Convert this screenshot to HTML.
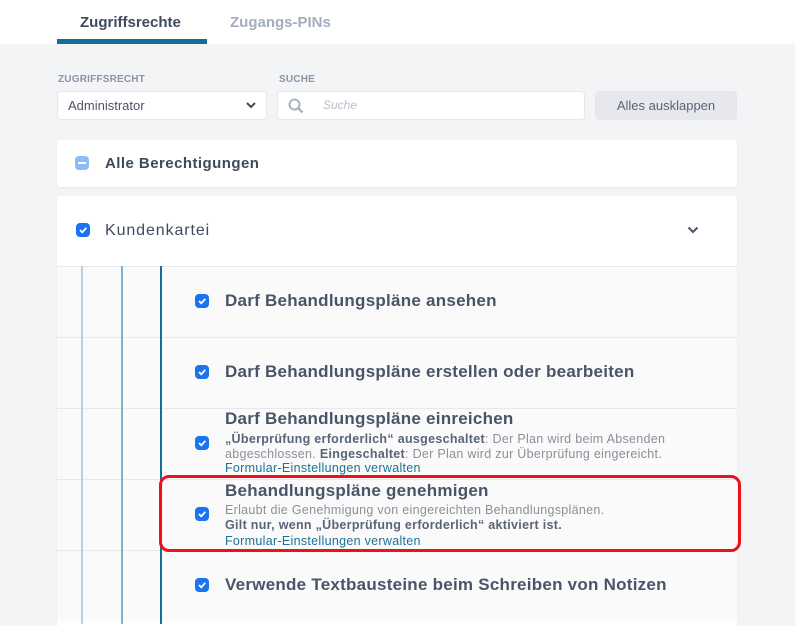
<!DOCTYPE html>
<html><head><meta charset="utf-8"><style>
*{box-sizing:border-box;margin:0;padding:0}
body{width:795px;height:624px;overflow:hidden;background:#f3f4f6;font-family:"Liberation Sans",sans-serif;color:#4a5468;position:relative}
.top{position:absolute;left:0;top:0;width:795px;height:44px;background:#fff}
.tab{position:absolute;top:14px;font-size:15px;font-weight:bold}
.ul{position:absolute;left:57px;top:39px;width:150px;height:5px;background:#0e7097}
.lbl{position:absolute;top:74px;font-size:10px;font-weight:bold;color:#8a94a6;letter-spacing:.2px}
.box{position:absolute;top:91px;height:29px;background:#fff;border:1px solid #e6e8ec;border-radius:4px}
.btn{position:absolute;left:595px;top:91px;width:142px;height:29px;background:#e6e8ee;border-radius:4px;font-size:13px;text-align:center;line-height:29px;color:#5a6478}
.card{position:absolute;left:57px;background:#fff;border-radius:4px;box-shadow:0 1px 2px rgba(0,0,0,.06)}
.cb{position:absolute;width:14px;height:14px;border-radius:4px;background:#1a73f0}
.cb svg{position:absolute;left:2px;top:2px}
.row{position:absolute;left:57px;width:680px;height:71px;background:#fafafb;border-top:1px solid #e6e8ee}
.vl{position:absolute;top:266px;width:2px;height:358px}
.t{position:absolute;left:225px;font-size:17px;font-weight:bold;color:#4a5468;white-space:nowrap;letter-spacing:.25px}
.s{position:absolute;left:225px;font-size:12.5px;color:#8a8f9a;white-space:nowrap;line-height:14.5px;letter-spacing:.3px}
.s b{color:#5a6478}
.a{color:#1a7394}
</style></head><body>
<div class="top"></div>
<div class="tab" style="left:80px;color:#3f4a5e">Zugriffsrechte</div>
<div class="tab" style="left:230px;color:#a4adbd">Zugangs-PINs</div>
<div class="ul"></div>
<div class="lbl" style="left:58px">ZUGRIFFSRECHT</div>
<div class="lbl" style="left:279px">SUCHE</div>
<div class="box" style="left:57px;width:210px;font-size:13px;line-height:27px;padding-left:10px">Administrator
<svg style="position:absolute;right:10px;top:10px" width="10" height="7"><path d="M1 1L5 5L9 1" stroke="#3f4a5e" stroke-width="2" fill="none"/></svg></div>
<div class="box" style="left:277px;width:308px">
<svg style="position:absolute;left:10px;top:6px" width="16" height="16"><circle cx="6.5" cy="6.5" r="5" stroke="#aab2bf" stroke-width="2" fill="none"/><path d="M10 10L14.5 14.5" stroke="#aab2bf" stroke-width="2.5"/></svg>
<span style="position:absolute;left:45px;top:6px;font-size:12px;font-style:italic;color:#b8bec9">Suche</span></div>
<div class="btn">Alles ausklappen</div>
<div class="card" style="top:140px;width:680px;height:47px">
<div style="position:absolute;left:18px;top:16px;width:14px;height:14px;border-radius:4px;background:#8bbcf5"><div style="position:absolute;left:3px;top:6px;width:8px;height:2px;background:#fff"></div></div>
<div style="position:absolute;left:48px;top:15px;font-size:15px;font-weight:bold;color:#3f4a5e;letter-spacing:.45px">Alle Berechtigungen</div></div>
<div class="card" style="top:196px;width:680px;height:430px;border-radius:4px 4px 0 0">
<div class="cb" style="left:19px;top:27px"><svg width="10" height="10"><path d="M2 5L4.3 7.3L8.3 2.8" stroke="#fff" stroke-width="1.8" fill="none"/></svg></div>
<div style="position:absolute;left:48px;top:26px;font-size:16px;color:#3f4a5e;letter-spacing:.9px">Kundenkartei</div>
<svg style="position:absolute;left:630px;top:30px" width="12" height="8"><path d="M1.5 1.5L6 6L10.5 1.5" stroke="#4a5468" stroke-width="2" fill="none"/></svg></div>
<div class="row" style="top:266px"></div>
<div class="row" style="top:337px"></div>
<div class="row" style="top:408px"></div>
<div class="row" style="top:479px"></div>
<div class="row" style="top:550px"></div>
<div class="vl" style="left:81px;background:#b7d3df"></div>
<div class="vl" style="left:121px;background:#7ab4cd"></div>
<div class="vl" style="left:160px;background:#126f97"></div>
<div class="cb" style="left:195px;top:294px"><svg width="10" height="10"><path d="M2 5L4.3 7.3L8.3 2.8" stroke="#fff" stroke-width="1.8" fill="none"/></svg></div>
<div class="t" style="top:291px">Darf Behandlungspläne ansehen</div>
<div class="cb" style="left:195px;top:365px"><svg width="10" height="10"><path d="M2 5L4.3 7.3L8.3 2.8" stroke="#fff" stroke-width="1.8" fill="none"/></svg></div>
<div class="t" style="top:362px">Darf Behandlungspläne erstellen oder bearbeiten</div>
<div class="cb" style="left:195px;top:436px"><svg width="10" height="10"><path d="M2 5L4.3 7.3L8.3 2.8" stroke="#fff" stroke-width="1.8" fill="none"/></svg></div>
<div class="t" style="top:409px">Darf Behandlungspläne einreichen</div>
<div class="s" style="top:432px"><b>„Überprüfung erforderlich“ ausgeschaltet</b>: Der Plan wird beim Absenden<br>abgeschlossen. <b>Eingeschaltet</b>: Der Plan wird zur Überprüfung eingereicht.<br><span class="a">Formular-Einstellungen verwalten</span></div>
<div class="cb" style="left:195px;top:507px"><svg width="10" height="10"><path d="M2 5L4.3 7.3L8.3 2.8" stroke="#fff" stroke-width="1.8" fill="none"/></svg></div>
<div class="t" style="top:481px">Behandlungspläne genehmigen</div>
<div class="s" style="top:503px">Erlaubt die Genehmigung von eingereichten Behandlungsplänen.<br><b>Gilt nur, wenn „Überprüfung erforderlich“ aktiviert ist.</b><br><span class="a" style="position:relative;top:2px">Formular-Einstellungen verwalten</span></div>
<div style="position:absolute;left:159px;top:475px;width:582px;height:77px;border:3px solid #f0101a;border-radius:10px"></div>
<div class="cb" style="left:195px;top:578px"><svg width="10" height="10"><path d="M2 5L4.3 7.3L8.3 2.8" stroke="#fff" stroke-width="1.8" fill="none"/></svg></div>
<div class="t" style="top:575px">Verwende Textbausteine beim Schreiben von Notizen</div>
</body></html>
